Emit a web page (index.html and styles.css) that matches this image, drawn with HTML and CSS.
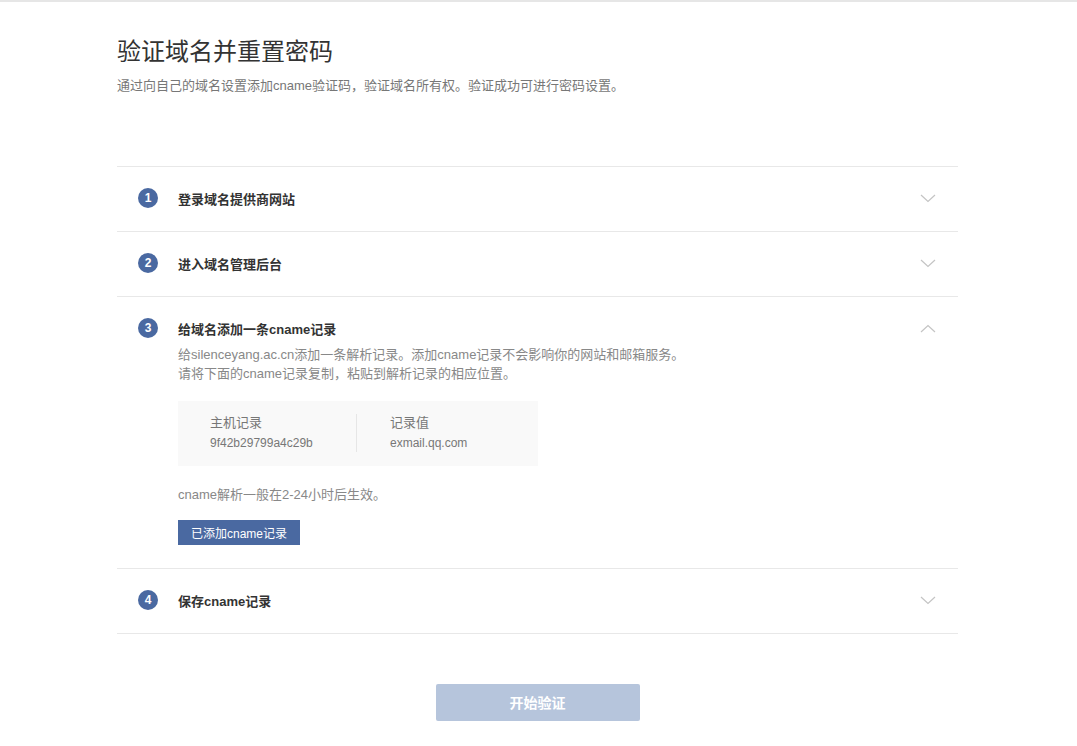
FILE: index.html
```html
<!DOCTYPE html>
<html lang="zh-CN">
<head>
    <meta charset="UTF-8">
    <meta name="viewport" content="width=device-width, initial-scale=1.0">
    <title>验证域名并重置密码</title>
    <link rel="stylesheet" href="styles.css">
</head>
<body>
    <div class="topbar"></div>
    <div class="container">
        <h1>验证域名并重置密码</h1>
        <p class="intro">通过向自己的域名设置添加cname验证码，验证域名所有权。验证成功可进行密码设置。</p>

        <ul class="steps">
            <li class="step">
                <div class="step-head">
                    <span class="step-num">1</span>
                    <span class="step-title">登录域名提供商网站</span>
                    <svg class="arrow" width="16" height="9" viewBox="0 0 16 9"><polyline points="1,1 8,7.5 15,1" fill="none" stroke="#c4c4c4" stroke-width="1.2"/></svg>
                </div>
            </li>
            <li class="step">
                <div class="step-head">
                    <span class="step-num">2</span>
                    <span class="step-title">进入域名管理后台</span>
                    <svg class="arrow" width="16" height="9" viewBox="0 0 16 9"><polyline points="1,1 8,7.5 15,1" fill="none" stroke="#c4c4c4" stroke-width="1.2"/></svg>
                </div>
            </li>
            <li class="step open">
                <div class="step-head">
                    <span class="step-num">3</span>
                    <span class="step-title">给域名添加一条cname记录</span>
                    <svg class="arrow" width="16" height="9" viewBox="0 0 16 9"><polyline points="1,8 8,1.5 15,8" fill="none" stroke="#c4c4c4" stroke-width="1.2"/></svg>
                </div>
                <div class="step-body">
                    <p class="desc">给silenceyang.ac.cn添加一条解析记录。添加cname记录不会影响你的网站和邮箱服务。<br>请将下面的cname记录复制，粘贴到解析记录的相应位置。</p>
                    <div class="record">
                        <div class="record-col">
                            <div class="record-label">主机记录</div>
                            <div class="record-value">9f42b29799a4c29b</div>
                        </div>
                        <div class="record-col">
                            <div class="record-label">记录值</div>
                            <div class="record-value">exmail.qq.com</div>
                        </div>
                    </div>
                    <p class="note">cname解析一般在2-24小时后生效。</p>
                    <button class="btn-small">已添加cname记录</button>
                </div>
            </li>
            <li class="step">
                <div class="step-head">
                    <span class="step-num">4</span>
                    <span class="step-title">保存cname记录</span>
                    <svg class="arrow" width="16" height="9" viewBox="0 0 16 9"><polyline points="1,1 8,7.5 15,1" fill="none" stroke="#c4c4c4" stroke-width="1.2"/></svg>
                </div>
            </li>
        </ul>

        <div class="actions">
            <button class="btn-verify" disabled>开始验证</button>
        </div>
    </div>
</body>
</html>
```

FILE: styles.css
```css
body {
    margin: 0;
    font-family: "Liberation Sans", "Noto Sans CJK SC", sans-serif;
    font-size: 13px;
    color: #333;
    background-color: #fff;
}
.topbar {
    height: 2px;
    background-color: #e6e6e6;
}
.container {
    width: 841px;
    margin-left: 117px;
}
h1 {
    margin: 34px 0 0;
    font-size: 24px;
    line-height: 32px;
    font-weight: normal;
    color: #333;
}
.intro {
    margin: 8px 0 0;
    font-size: 13px;
    line-height: 20px;
    color: #777;
}
.steps {
    list-style: none;
    margin: 70px 0 0;
    padding: 0;
    border-bottom: 1px solid #e8e8e8;
}
.step {
    border-top: 1px solid #e8e8e8;
    padding: 21px 0 23px;
}
.step-head {
    display: flex;
    align-items: center;
    height: 20px;
}
.step-num {
    width: 20px;
    height: 20px;
    margin-left: 21px;
    border-radius: 50%;
    background-color: #4a69a1;
    color: #fff;
    font-size: 12px;
    font-weight: bold;
    line-height: 20px;
    text-align: center;
}
.step-title {
    margin-left: 20px;
    font-size: 13px;
    font-weight: bold;
    color: #333;
    flex-grow: 1;
}
.arrow {
    margin-right: 22px;
}
.step-body {
    padding-left: 61px;
}
.desc {
    margin: 7px 0 0;
    line-height: 19px;
    color: #888;
}
.record {
    display: flex;
    width: 360px;
    margin-top: 18px;
    padding: 13px 0 14px;
    background-color: #f9f9f9;
}
.record-col {
    width: 146px;
    padding-left: 32px;
    font-size: 12px;
    color: #777;
}
.record-col + .record-col {
    width: auto;
    padding-left: 33px;
    border-left: 1px solid #e6e6e6;
}
.record-label {
    line-height: 18px;
    font-size: 13px;
}
.record-value {
    margin-top: 2px;
    line-height: 18px;
}
.note {
    margin: 20px 0 0;
    line-height: 18px;
    color: #888;
}
.btn-small {
    margin-top: 16px;
    height: 25px;
    padding: 0 13px;
    border: none;
    background-color: #4a69a1;
    color: #fff;
    font-family: inherit;
    font-size: 12px;
    cursor: pointer;
}
.actions {
    display: flex;
    justify-content: center;
    margin-top: 50px;
}
.btn-verify {
    width: 204px;
    height: 37px;
    padding-bottom: 3px;
    border: none;
    border-radius: 2px;
    background-color: #b6c5dc;
    color: #fff;
    font-family: inherit;
    font-size: 14px;
    font-weight: bold;
}
```
